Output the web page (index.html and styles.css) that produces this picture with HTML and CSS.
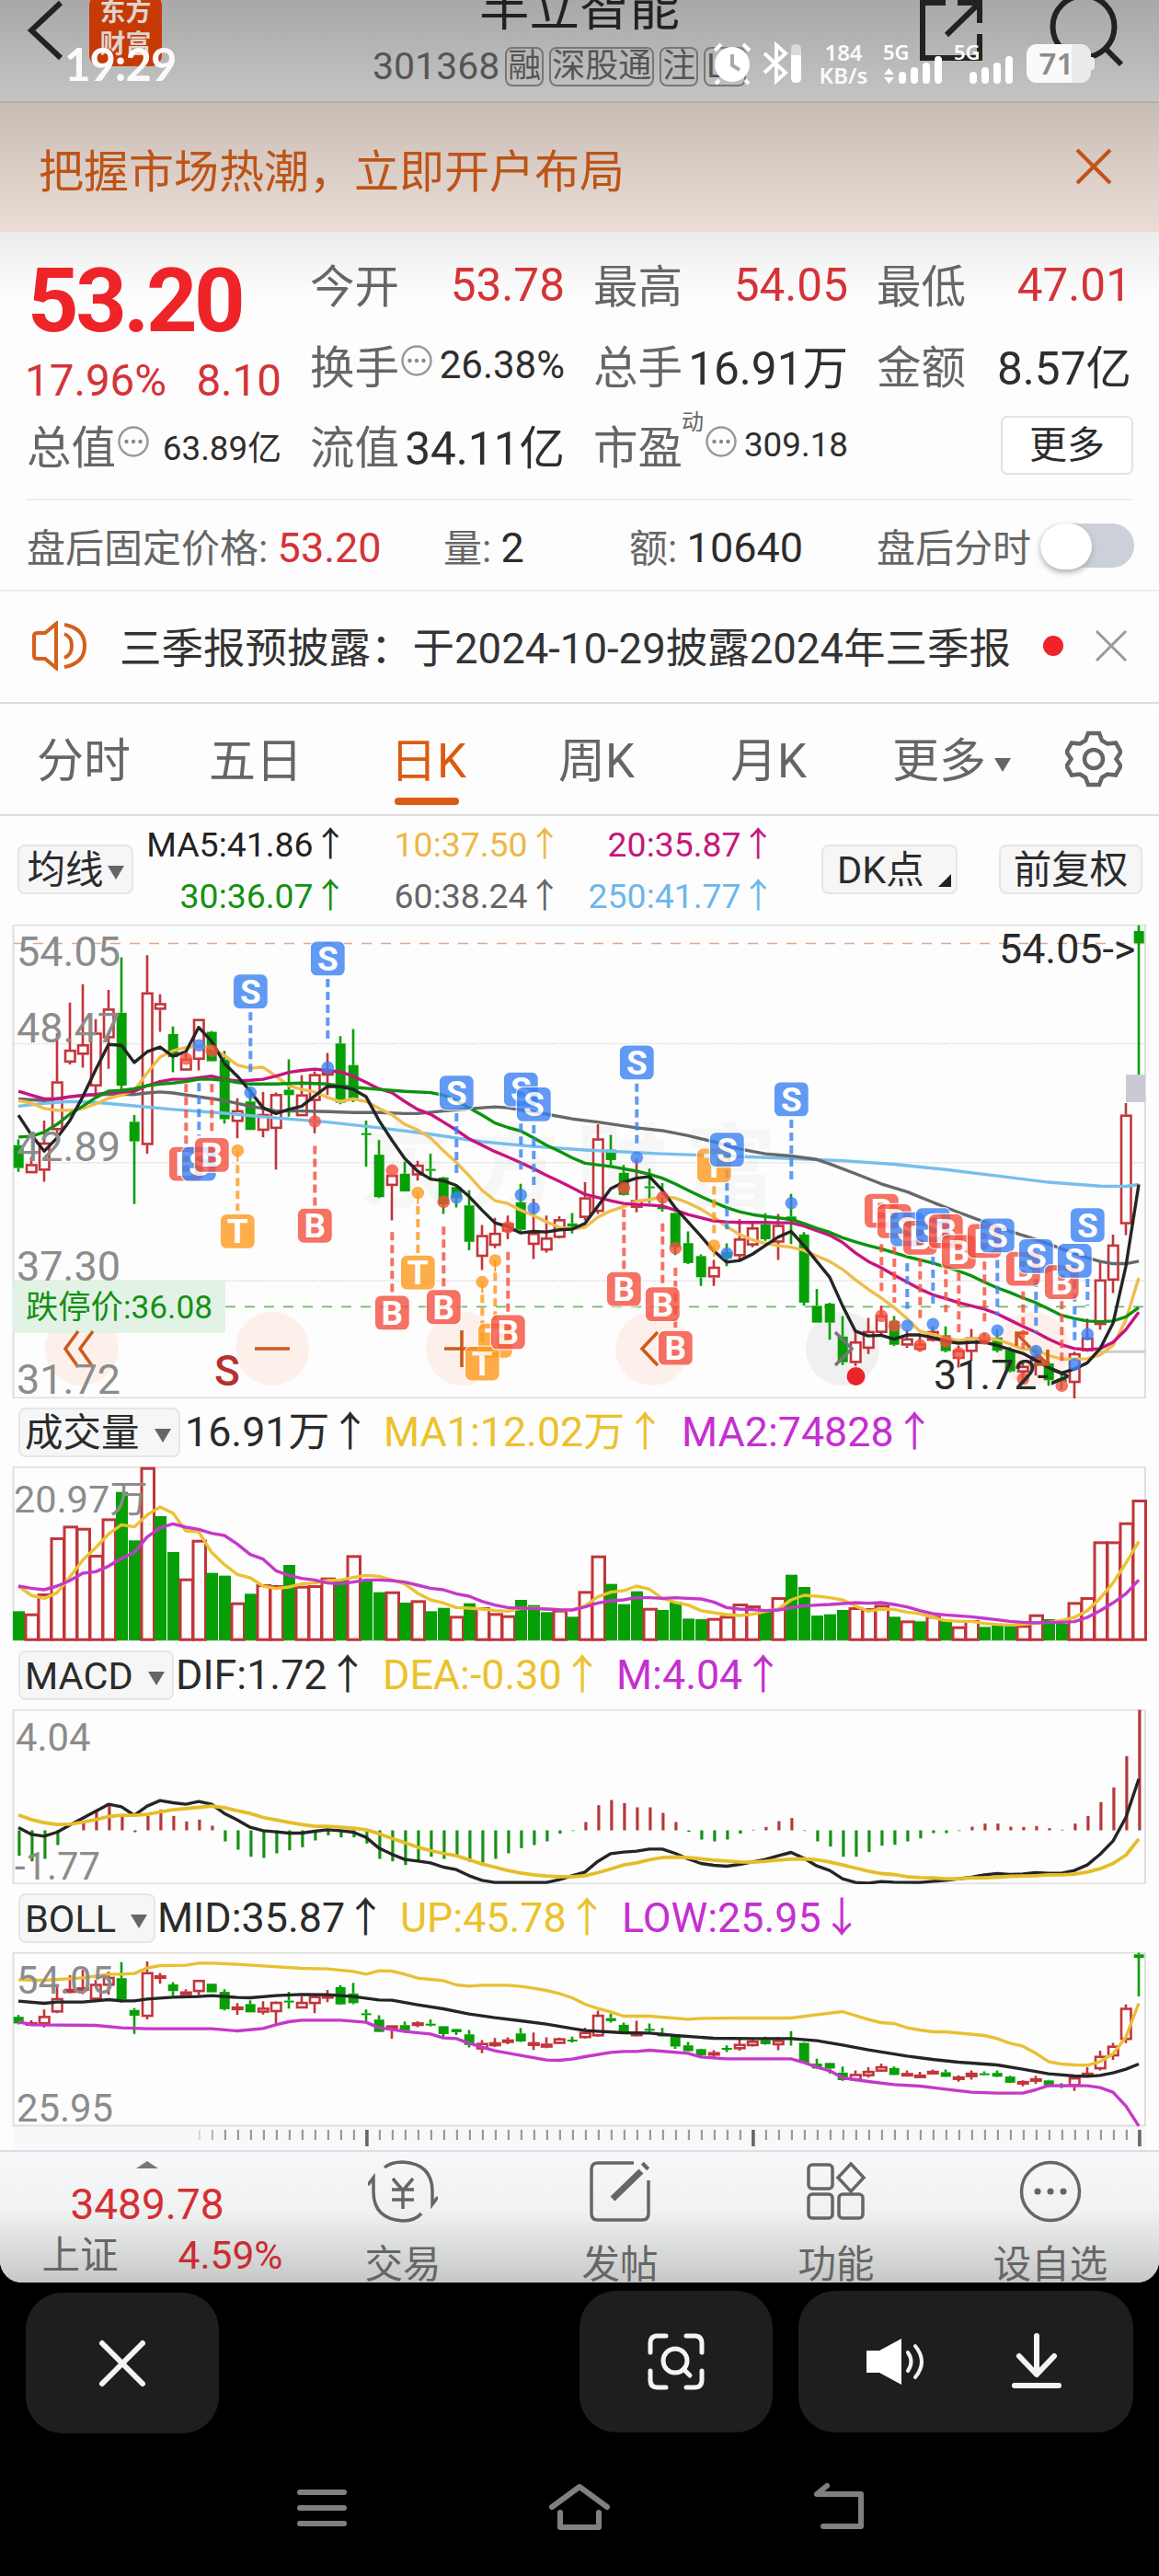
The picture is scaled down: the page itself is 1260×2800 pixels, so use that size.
FILE: index.html
```html
<!DOCTYPE html>
<html lang="zh-CN">
<head>
<meta charset="utf-8">
<title>丰立智能 301368</title>
<link rel="stylesheet" href="styles.css">
</head>
<body>
<div class="app">
  <header class="top">
    <svg class="top-back" width="40" height="70" viewBox="0 0 40 70"><path d="M36 3 4 33 36 63"/></svg>
    <div class="logo"><span>东方</span><span>财富</span></div>
    <div class="top-title">
      <div class="stock-name">丰立智能</div>
      <div class="stock-code"><span>301368</span><i>融</i><i>深股通</i><i>注</i><i>L2</i></div>
    </div>
    <svg class="top-share" width="70" height="72" viewBox="0 0 70 72"><path d="M29 3H4v60h62V37M42 3h24v22M66 3 30 38"/></svg>
    <svg class="top-search" width="84" height="76" viewBox="0 0 84 76"><circle cx="38" cy="29" r="33.500"/><path d="M62 53 79 70"/></svg>
    <div class="status">
      <span class="clock">19:29</span>
      <svg class="status-icons" width="110" height="48" viewBox="0 0 110 48">
        <circle cx="22" cy="25" r="19" fill="#fff"/><path d="M22 14v12l8 5" stroke="#aaa" stroke-width="4" fill="none"/>
        <path d="M3 10 10 3M34 3l7 7M8 42l-4 4M36 42l4 4" stroke="#fff" stroke-width="4"/>
        <path d="M57 13 80 34 70 43V4l10 9L57 34" fill="none" stroke="#fff" stroke-width="4"/>
        <rect x="86" y="3" width="11" height="42" rx="5" fill="#fff" opacity=".5"/><path d="M86 15h11v25q0 5-5.500 5T86 40z" fill="#fff"/>
      </svg>
      <span class="speed"><b>184</b><b>KB/s</b></span>
      <svg class="signal" width="150" height="48" viewBox="0 0 150 48">
        <text x="2" y="20">5G</text><text x="79" y="20">5G</text>
        <path class="arrows" d="M3 36 8.500 29l5.500 7zM3 39l5.500 7 5.500-7z"/>
        <path d="M23 42V37M36 42V32M49 42V27M62 42V20M100 42V37M113 42V32M126 42V27M139 42V20"/>
      </svg>
      <span class="battery">71</span>
    </div>
  </header>

  <div class="banner"><span>把握市场热潮，立即开户布局</span><svg width="40" height="40" viewBox="0 0 40 40"><path d="M2 2 38 38M38 2 2 38"/></svg></div>

  <section class="quote">
    <div class="quote-grid">
      <div class="lead"><div class="price">53.20</div><div class="chg"><span>17.96%</span><span>8.10</span></div></div>
      <div class="cell"><label>今开</label><b class="up">53.78</b></div>
      <div class="cell"><label>最高</label><b class="up">54.05</b></div>
      <div class="cell"><label>最低</label><b class="up">47.01</b></div>
      <div class="cell"><label>换手</label><svg class="dots"><use href="#more-dots"/></svg><b class="mid">26.38%</b></div>
      <div class="cell"><label>总手</label><b>16.91万</b></div>
      <div class="cell"><label>金额</label><b>8.57亿</b></div>
      <div class="cell"><label>总值</label><svg class="dots"><use href="#more-dots"/></svg><b class="small">63.89亿</b></div>
      <div class="cell"><label>流值</label><b>34.11亿</b></div>
      <div class="cell pe"><label>市盈<sup>动</sup></label><svg class="dots"><use href="#more-dots"/></svg><b class="small">309.18</b></div>
      <div class="cell end"><button class="more">更多</button></div>
    </div>
    <div class="after">
      <span>盘后固定价格: <b class="up">53.20</b></span>
      <span>量: <b>2</b></span>
      <span>额: <b>10640</b></span>
      <span>盘后分时</span>
      <span class="toggle"><i></i></span>
    </div>
  </section>

  <section class="notice">
    <svg width="62" height="54" viewBox="0 0 62 54"><path d="M3 16q0-3 4-3h8L27 3v48L15 41H7q-4 0-4-3zM36 14q8 3 8 13t-8 13M36 4q22 4 22 23T36 50"/></svg>
    <span class="notice-text">三季报预披露：于2024-10-29披露2024年三季报</span>
    <i class="red-dot"></i>
    <svg class="close" width="36" height="36" viewBox="0 0 36 36"><path d="M2 2 34 34M34 2 2 34"/></svg>
  </section>

  <nav class="tabs">
    <span>分时</span><span>五日</span><span class="on">日K</span><span>周K</span><span>月K</span><span>更多<i class="caret"></i></span>
    <svg width="62" height="62" viewBox="0 0 62 62"><path d="M25 3h12l3 8 6 3.500 9-1 5.500 10-5 7.500 5 7.500-5.500 10-9-1-6 3.500-3 8H25l-3-8-6-3.500-9 1L1.500 38.500l5-7.500-5-7.500L7 13.500l9 1 6-3.500z"/><circle cx="31" cy="31" r="10"/></svg>
  </nav>

  <section class="ma">
    <button class="pill ma-pill">均线<i class="caret"></i></button>
    <div class="ma-grid">
      <span class="k">MA5:41.86↑</span><span class="y">10:37.50↑</span><span class="m">20:35.87↑</span>
      <span class="g">30:36.07↑</span><span class="s">60:38.24↑</span><span class="b">250:41.77↑</span>
    </div>
    <button class="pill dk">DK点<i></i></button>
    <button class="pill fq">前复权</button>
  </section>

  <svg class="chart" id="kline" width="1260" height="515"></svg>
  <div class="ind vol"><button class="pill">成交量<i class="caret"></i></button><span>16.91万↑</span><span class="gold">MA1:12.02万↑</span><span class="purple">MA2:74828↑</span></div>
  <svg class="chart" id="volume" width="1260" height="190"></svg>
  <div class="ind macd"><button class="pill">MACD<i class="caret"></i></button><span>DIF:1.72↑</span><span class="gold">DEA:-0.30↑</span><span class="purple">M:4.04↑</span></div>
  <svg class="chart" id="macd" width="1260" height="190"></svg>
  <div class="ind boll"><button class="pill">BOLL<i class="caret"></i></button><span>MID:35.87↑</span><span class="gold">UP:45.78↑</span><span class="purple">LOW:25.95↓</span></div>
  <svg class="chart" id="boll" width="1260" height="215"></svg>

  <footer class="bottom">
    <div class="index"><i class="tri"></i><div class="idx-value">3489.78</div><div class="idx-row"><span>上证</span><b>4.59%</b></div></div>
    <div class="item"><svg width="76" height="68" viewBox="0 0 76 68"><path d="M18 8Q25 2 38 2q32 2 32 32v14l6-8M58 58Q51 66 38 66 6 64 6 34V19L0 27M27 20l11 13 11-13M38 33v20M26 32h24M26 43h24"/></svg><span>交易</span></div>
    <div class="item"><svg width="66" height="68" viewBox="0 0 66 68"><path d="M48 3H9Q2 3 2 10v48q0 7 7 7h48q7 0 7-7V22"/><path d="M56 12 25 42" stroke-width="7"/><path d="M59 8l3-3" stroke-width="9"/></svg><span>发帖</span></div>
    <div class="item"><svg width="66" height="68" viewBox="0 0 66 68"><rect x="3" y="5" width="26" height="26" rx="4"/><rect x="3" y="37" width="26" height="26" rx="4"/><rect x="36" y="37" width="26" height="26" rx="4"/><path d="M49 4 63 19 49 34 35 19z"/></svg><span>功能</span></div>
    <div class="item"><svg width="68" height="68" viewBox="0 0 68 68"><circle cx="34" cy="34" r="31.500"/><path d="M20 34h.1M34 34h.1M48 34h.1" stroke-width="7" stroke-linecap="round"/></svg><span>设自选</span></div>
  </footer>
</div>

<div class="tools">
  <div class="tool t1"><svg width="56" height="56" viewBox="0 0 56 56"><path d="M6 6 50 50M50 6 6 50"/></svg></div>
  <div class="tool t2"><svg width="64" height="64" viewBox="0 0 64 64"><path d="M4 22V12q0-8 8-8h9M43 4h9q8 0 8 8v10M4 42v10q0 8 8 8h9M43 60h9q8 0 8-8V42"/><circle cx="31" cy="31" r="13"/><path d="M40 40l7 7"/></svg></div>
  <div class="tool t3">
    <svg width="66" height="56" viewBox="0 0 66 56"><path d="M2 16h14L40 3v50L16 40H2z" fill="#fff" stroke="none"/><path d="M47 18q7 10 0 20M55 11q14 17 0 34" stroke-width="4"/></svg>
    <svg width="56" height="64" viewBox="0 0 56 64"><path d="M28 4v40M9 26l19 20 19-20M4 58h48"/></svg>
  </div>
</div>
<div class="sysnav">
  <svg width="54" height="52" viewBox="0 0 54 52"><path d="M3 11h48M3 28h48M3 45h48"/></svg>
  <svg width="66" height="54" viewBox="0 0 66 54"><path d="M3 27 33 5 63 27M12 33v16h42V33"/></svg>
  <svg width="58" height="54" viewBox="0 0 58 54"><path d="M16 4 5 13h48v35H12"/></svg>
</div>

<svg width="0" height="0" class="defs"><symbol id="more-dots" viewBox="0 0 36 36"><circle cx="18" cy="18" r="15.500" fill="none" stroke="#999" stroke-width="2.500"/><circle cx="10.500" cy="18" r="2.200" fill="#888"/><circle cx="18" cy="18" r="2.200" fill="#888"/><circle cx="25.500" cy="18" r="2.200" fill="#888"/></symbol></svg>
<script src="chart.js"></script>
</body>
</html>
```
FILE: styles.css
```css
* { box-sizing: border-box; }
body { margin: 0; width: 1260px; height: 2800px; background: #000; color: #2b2b2b; font-family: Roboto, "Noto Sans CJK SC", sans-serif; overflow: hidden; }
button { font-family: inherit; color: #2b2b2b; margin: 0; }
svg { display: block; flex: none; }
i { font-style: normal; }
b { font-weight: 400; }
.defs { position: absolute; }
.app { height: 2481px; background: #fdfdfd; border-radius: 0 0 24px 24px; overflow: hidden; }

.top { position: relative; height: 112px; display: flex; padding-left: 30px; background: linear-gradient(#a8a8a8, #c4c4c4); border-bottom: 2px solid #b0b0b0; }
.top svg { fill: none; stroke: #222; }
.top-back, .top-share, .top-search { stroke-width: 6; }
.logo { width: 79px; height: 78px; margin: -6px 0 0 27px; background: #c63a05; border-radius: 12px; color: #ded4ce; font-size: 28px; line-height: 35px; display: flex; flex-direction: column; align-items: center; padding-top: 2px; font-weight: 700; }
.top-title { width: 540px; margin-left: 229px; display: flex; flex-direction: column; align-items: flex-start; }
.stock-name { font-size: 54.500px; line-height: 60px; margin: -22px 0 0 116px; color: #222; white-space: nowrap; }
.stock-code { margin-top: 9px; display: flex; align-items: center; font-size: 41px; height: 50px; color: #555; }
.stock-code span { margin-right: 6px; }
.stock-code i { border: 2px solid #777; border-radius: 8px; height: 43px; line-height: 38px; font-size: 36px; padding: 0 1px; margin-right: 6px; white-space: nowrap; }
.top-share { position: absolute; left: 999px; top: 0; }
.top-search { position: absolute; left: 1140px; top: 0; }
.status { position: absolute; left: 70px; top: 44px; width: 1125px; height: 50px; display: flex; align-items: center; color: #fafafa; }
.status svg { stroke: none; }
.clock { font-family: Lato, sans-serif; font-size: 49px; font-weight: 700; width: 704px; letter-spacing: -1px; flex: none; }
.status-icons { margin-right: 6px; }
.speed { font-family: "Noto Sans", sans-serif; font-size: 24px; line-height: 25px; display: flex; flex-direction: column; align-items: center; width: 54px; flex: none; }
.speed b { font-weight: 600; }
.signal { margin-left: 14px; }
.signal text { fill: #fff; font-family: "Noto Sans", sans-serif; font-size: 22px; font-weight: 600; }
.signal path { stroke: #fff; stroke-width: 8; stroke-linecap: round; }
.signal .arrows { fill: #fff; stroke: none; }
.battery { position: relative; width: 70px; height: 42px; flex: none; border-radius: 11px; background: linear-gradient(90deg, #fafafa 49px, #ebebeb 49px); color: #8b8b8b; font-family: "Noto Sans", sans-serif; font-size: 33px; line-height: 42px; font-weight: 600; text-align: center; margin: 0 0 0 8px; padding-right: 5px; }
.battery::after { content: ""; position: absolute; right: -4px; top: 14px; width: 4px; height: 14px; border-radius: 0 3px 3px 0; background: #ebebeb; }

.banner { height: 140px; padding: 0 51px 0 42px; display: flex; align-items: center; justify-content: space-between; background: linear-gradient(#c8bdb5, #ebddd6); color: #bd5417; font-size: 49px; }
.banner svg { stroke: #c45217; stroke-width: 4; margin-bottom: 2px; }

.quote { height: 389px; padding: 13px 28px 0 29px; background: linear-gradient(#ececec, #fdfdfd 70px); }
.quote-grid { display: grid; grid-template-columns: repeat(4, 277px); grid-template-rows: repeat(3, 87.500px); column-gap: 31px; }
.lead { grid-row: 1 / 3; color: #ee2428; }
.price { font-size: 97px; font-weight: 700; line-height: 100px; margin: 12px 0 0 1px; letter-spacing: -3.500px; }
.chg { display: flex; justify-content: space-between; font-size: 47.500px; line-height: 60px; margin: 7px 0 0 -2px; color: #d43338; }
.cell { display: flex; align-items: center; }
.cell label { font-size: 48.500px; color: #666; position: relative; white-space: nowrap; margin-top: -1px; }
.cell b { margin-left: auto; font-size: 49.500px; color: #2e2e2e; white-space: nowrap; }
.cell b.up { margin-top: 3px; }
.cell b.up, .after b.up { color: #d43338; }
.cell b.mid { font-size: 42px; }
.cell b.small { font-size: 36.800px; }
.dots { width: 36px; height: 36px; margin: -8px 0 0 1px; }
.cell sup { font-size: 24px; position: absolute; left: 96px; top: -7px; line-height: 36px; }
.pe .dots { margin-left: 24px; }
.end { justify-content: flex-end; }
.more { width: 144px; height: 64px; border: 2px solid #e3e3e3; border-radius: 7px; background: #fff; font-size: 41px; line-height: 54px; padding: 0; margin: 0 -2px 0 0; }
.after { margin-top: 14px; border-top: 2px solid #eee; height: 103px; display: grid; grid-template-columns: 453px 202px 269px 178px 102px; align-items: center; font-size: 42px; color: #666; white-space: nowrap; padding-bottom: 3px; }
.after b { font-size: 45px; color: #2b2b2b; }
.toggle { height: 48px; border-radius: 24px; background: #ccd0d8; }
.toggle i { display: block; width: 56px; height: 50px; border-radius: 28px; background: #fff; box-shadow: 0 3px 6px #aaa; }

.notice { height: 124px; border-top: 2px solid #eee; border-bottom: 2px solid #ddd; display: flex; align-items: center; padding: 0 0 2px 34px; }
.notice svg { fill: none; stroke: #d65f1a; stroke-width: 4; }
.notice-text { margin: -3px 0 0 34px; font-size: 45.500px; width: 1004px; color: #333; white-space: nowrap; }
.red-dot { width: 22px; height: 22px; border-radius: 50%; background: #ee2428; margin: 0 34px 0 0; }
.notice .close { stroke: #999; stroke-width: 3; }

.tabs { height: 122px; border-bottom: 2px solid #ddd; display: grid; grid-template-columns: 187px 197px 183px 187px 176px 188px 62px; padding-left: 40px; align-items: center; font-size: 51px; color: #666; }
.tabs span { position: relative; white-space: nowrap; margin-top: -4px; }
.tabs .on { color: #db5b12; }
.tabs .on::after { content: ""; position: absolute; left: 5px; bottom: -15px; width: 70px; height: 8px; border-radius: 4px; background: #db5b12; }
.caret { display: inline-block; border: 9px solid transparent; border-top: 15px solid #666; border-bottom: 0; vertical-align: middle; margin-left: 9px; }
.tabs svg { fill: none; stroke: #666; stroke-width: 4.500; }

.ma { height: 118px; display: flex; padding-left: 19px; align-items: flex-start; }
.pill { height: 54px; border: 2px solid #e6e6e8; border-radius: 8px; background: #f6f6f7; font-size: 41.500px; line-height: 45px; padding: 0; white-space: nowrap; flex: none; }
.ma .pill { margin-top: 31px; }
.ma-pill { width: 126px; }
.ma-pill .caret { margin-left: 4px; }
.ma-grid { display: grid; grid-template-columns: 233px 233px 232px; grid-template-rows: 56px 56px; font-size: 37.400px; line-height: 56px; text-align: right; margin-top: 3px; }
.k { color: #222; } .y { color: #ecb945; } .m { color: #c4187c; } .g { color: #159015; } .s { color: #666; } .b { color: #6cb7ea; }
.dk { width: 148px; margin-left: 50px; text-align: left; padding-left: 15px; position: relative; }
.dk i { position: absolute; right: 5px; bottom: 6px; border-left: 14px solid transparent; border-bottom: 14px solid #222; }
.fq { width: 156px; margin-left: 45px; }

.ind { height: 74px; padding: 10px 0 0 20px; display: grid; font-size: 44.800px; line-height: 54px; white-space: nowrap; }
.ind .pill { text-align: left; padding-left: 5px; line-height: 47px; }
.ind .caret { margin-left: 16px; }
.vol { grid-template-columns: 181px 216px 324px 1fr; }
.vol .pill { width: 176px; }
.macd { grid-template-columns: 171px 225px 254px 1fr; }
.macd .pill { width: 169px; }
.boll { grid-template-columns: 151px 264px 241px 1fr; }
.boll .pill { width: 149px; }
.gold { color: #ebc22c; } .purple { color: #c52fd0; }
.chart { font-size: 44px; }
.chart text { fill: #8c8c8c; }

.bottom { height: 145px; border-top: 2px solid #dedee2; background: linear-gradient(#f7f8fa, #f0f1f1 45%, #c6c7c7); display: grid; grid-template-columns: 320px 236px 236px 234px 232px; color: #666; font-size: 41.500px; }
.index { display: flex; flex-direction: column; align-items: center; }
.tri { border: 12px solid transparent; border-bottom: 8px solid #777; border-top: 0; margin-top: 10px; }
.idx-value { font-size: 46px; line-height: 54px; margin-top: 12px; color: #d42f34; }
.idx-row { display: flex; gap: 65px; line-height: 58px; padding-left: 33px; }
.idx-row b { color: #c92c31; font-size: 42.500px; }
.item { display: flex; flex-direction: column; align-items: center; padding-top: 9px; }
.item svg { fill: none; stroke: #666; stroke-width: 3.500; }
.item span { line-height: 60px; margin-top: 16px; }

.tools { height: 163px; padding: 9px 28px 0; display: grid; grid-template-columns: 210px 336px 210px 364px; column-gap: 28px; }
.tool { height: 154px; border-radius: 40px; background: #1e1e1e; display: flex; align-items: center; justify-content: center; }
.tool svg { fill: none; stroke: #f4f4f4; stroke-width: 6; stroke-linecap: round; stroke-linejoin: round; }
.t1 { margin-top: 2px; height: 153px; }
.t2 { grid-column: 3; }
.t2 svg { stroke-width: 5; }
.t3 { justify-content: flex-start; padding-left: 72px; gap: 93px; }
.sysnav { display: flex; height: 156px; padding: 54px 0 0 323px; gap: 220px; }
.sysnav svg { fill: none; stroke: #808080; stroke-width: 6; stroke-linecap: round; stroke-linejoin: round; }
```
FILE: chart.js
```js
const NS = 'http://www.w3.org/2000/svg';
const RED = '#c2353a', GREEN = '#06a006';
const X = i => 20 + 14 * i;

function el(parent, tag, attrs, text) {
  const node = document.createElementNS(NS, tag);
  for (const k in attrs) node.setAttribute(k, attrs[k]);
  if (text) node.textContent = text;
  parent.appendChild(node);
  return node;
}

/* Series text: plain numbers are consecutive samples, "i:v" jumps to sample i. */
function line(svg, data, y, color, width = 3.4) {
  let i = -1;
  const pts = data.trim().split(/\s+/).map(t => {
    if (t.includes(':')) { const p = t.split(':'); i = +p[0]; return [i, +p[1]]; }
    return [++i, +t];
  });
  el(svg, 'polyline', { points: pts.map(p => X(p[0]) + ',' + y(p[1])).join(' '), fill: 'none', stroke: color, 'stroke-width': width, 'stroke-linejoin': 'round' });
}
function frame(svg, h) {
  el(svg, 'rect', { x: 14.5, y: .5, width: 1230.5, height: h, fill: 'none', stroke: '#dedede', 'stroke-width': 2 });
}
function label(svg, x, mid, s, size, fill, weight) {
  el(svg, 'text', { x, y: mid + size * .36, style: `font-size:${size}px;` + (fill ? `fill:${fill};` : '') + (weight ? `font-weight:${weight}` : '') }, s);
}

/* colour, high, body top, body bottom, low */
const candles = `g720,738,810,822 r775,798,826,826 r660,730,818,853 r385,537,690,700 r288,437,477,483 r230,420,452,493 r340,383,552,575
r248,307,400,497 g145,320,550,585 g643,664,726,924 r138,256,737,765 r262,290,310,380 g363,387,460,508 r440,465,502,502 r340,340,468,502
g377,380,473,473 g440,468,656,670 r590,628,664,716 g560,600,690,690 r570,640,692,713 r572,577,686,815 g467,563,580,648 r517,578,646,646
r505,514,598,700 r447,505,518,580 g394,417,604,609 g371,485,590,602 g660,700,703,806 g722,768,902,905 r830,832,866,975 g790,828,884,884
r787,800,833,850 g765,813,818,843 g838,840,925,955 g868,870,905,935 g880,928,1043,1070 r990,1022,1090,1132 r967,1015,1055,1063
r960,985,1010,1035 g860,918,1005,1010 r907,1015,1052,1097 r960,1030,1070,1077 r962,972,1030,1033 g952,985,995,1017 r855,903,967,975
r672,717,948,955 g705,752,785,802 g800,825,895,897 r780,912,935,950 g812,868,872,920 g858,930,940,948 g950,952,1060,1085
g1010,1047,1110,1113 g1083,1088,1155,1182 r1100,1122,1155,1182 g1048,1075,1095,1120 r972,1033,1088,1105 r978,998,1054,1060
g953,988,1035,1040 r955,990,1045,1100 g892,963,977,1050 g1012,1020,1235,1245 g1192,1245,1298,1298 g1235,1238,1298,1352
g1277,1342,1423,1432 r1320,1358,1425,1435 r1283,1325,1380,1397 r1245,1275,1330,1335 g1277,1293,1368,1372 r1320,1348,1370,1378
r1335,1365,1383,1390 r1310,1325,1355,1358 g1310,1338,1388,1392 r1370,1385,1412,1440 r1318,1345,1390,1418 g1330,1350,1353,1360
g1320,1345,1387,1392 g1375,1385,1452,1455 r1425,1435,1455,1490 r1375,1405,1420,1465 g1420,1427,1480,1497 g1455,1475,1485,1510
r1390,1395,1488,1540 r1285,1345,1388,1390 r1105,1162,1305,1320 r1020,1052,1165,1205 r605,642,987,1022 g44,62,100,517`
  .trim().split(/\s+/).map(t => [t[0], ...t.slice(1).split(',').map(Number)]);

function drawCandles(svg, y) {
  candles.forEach(([c, hi, top, bot, lo], i) => {
    const color = c === 'r' ? RED : GREEN, x = X(i);
    const t = y(top), b = Math.max(y(bot), t + 2);
    el(svg, 'path', { d: `M${x} ${y(hi)}V${t}M${x} ${b}V${y(lo)}`, stroke: color, 'stroke-width': 2.6 });
    if (c === 'r') el(svg, 'rect', { x: x - 5, y: t + 1, width: 10.5, height: Math.max(b - t - 2, 1.5), fill: b - t > 9 ? '#fdfdfd' : 'none', stroke: color, 'stroke-width': 2.6 });
    else el(svg, 'rect', { x: x - 5.3, y: t, width: 11, height: b - t, fill: color });
  });
}

/* ---- daily K ---- */
{
  const svg = document.getElementById('kline');
  const y = v => (v - 44) / 2.904 + .8;
  el(svg, 'text', { x: 390, y: 300, 'letter-spacing': 18, style: 'font-size:100px;font-weight:700;fill:#f6f6f7' }, '东方财富');
  frame(svg, 514);
  for (const v of [418, 793, 1166]) el(svg, 'path', { d: `M15 ${y(v)}H1244`, stroke: '#d8d8d8', 'stroke-width': 1.5, 'stroke-dasharray': '1.5 1.5' });
  el(svg, 'path', { d: `M15 ${y(101)}H1244`, stroke: '#dfa98c', 'stroke-width': 1.6, 'stroke-dasharray': '11 10' });
  el(svg, 'path', { d: `M245 ${y(1248)}H1244`, stroke: '#6cba6c', 'stroke-width': 1.6, 'stroke-dasharray': '11 10' });
  el(svg, 'path', { d: `M1190 ${y(1390)}H1245`, stroke: '#ccc', 'stroke-width': 3 });
  [89, 296, 503, 709, 916, 1123].forEach((x, i) => el(svg, 'circle', { cx: x, cy: 461, r: 40, fill: i === 4 ? '#f0f0f0' : '#fdf0ea' }));
  const icon = (d, c) => el(svg, 'path', { d, fill: 'none', stroke: c || '#cc5a1c', 'stroke-width': 3.6 });
  el(svg, 'rect', { x: 14, y: 386, width: 231, height: 58, rx: 4, fill: '#dff2e3', opacity: .9 });
  drawCandles(svg, y);

  line(svg, `0:615 2:606 4:600 6:603 8:610 12:625 16:637 20:652 24:665 28:683 32:703 36:727 40:742 44:753 50:765 55:772 60:780 64:787 68:798 72:815 76:835 80:855 84:867 86:868 87:862`, y, '#76bfec');
  line(svg, `0:592 2:597 4:585 6:578 8:577 9:578 10:573 11:570 12:573 14:585 16:597 18:615 20:630 22:630 24:632 26:635 28:635 30:638 31:638 33:630 35:623 37:617 38:620 41:640 43:655 45:665 48:683 50:692 52:708 54:727 56:750 58:765 60:772 62:783 63:797 65:828 67:860 69:885 71:918 73:950 75:980 77:1010 79:1035 81:1065 83:1093 84:1105 85:1112 86:1112 87:1104`, y, '#686868');
  line(svg, `597 605 622 628 628 622 608 590 580 565 510 460 440 430 425 430 455 485 495 492 520 550 562 570 587 600 592 600 622 642 672 690 715 755 792 835 880 913 922 943 960 980 997 1003 997 965 945 932 915 910 900 905 920 940 965 995 1020 1037 1048 1055 1060 1070 1088 1105 1130 1163 1193 1220 1250 1285 1325 1335 1345 1355 1348 1347 1352 1365 1382 1383 1402 1413 1413 1412 1400 1370 1290 1157`, y, '#f0bd4c');
  line(svg, `568 580 592 592 585 580 578 572 570 568 550 537 530 530 525 520 530 535 533 530 520 508 502 498 502 507 520 540 560 572 600 625 640 665 690 718 738 758 775 793 812 833 852 872 893 903 913 922 925 927 930 943 957 967 977 980 982 982 982 983 983 993 1008 1022 1045 1078 1105 1125 1148 1170 1192 1210 1222 1235 1245 1255 1270 1290 1310 1328 1350 1368 1380 1383 1380 1360 1320 1265`, y, '#c8147f');
  line(svg, `712 710 697 672 640 615 588 567 565 560 550 545 542 537 530 530 533 540 545 545 545 22:542 24:545 26:555 28:562 30:568 32:572 33:580 597 620 643 668 682 693 715 738 757 778 795 46:805 48:820 830 842 860 880 900 918 935 948 957 963 60:972 985 1000 1013 1030 1043 1055 1065 1077 1090 1100 1110 1122 1135 1150 1170 1188 1203 1220 1235 1255 1275 1285 1293 1295 1293 1280 1250`, y, '#0c930f');
  line(svg, `643 705 757 715 660 585 500 420 423 477 443 428 457 443 366 410 480 520 568 620 638 625 615 583 552 553 562 585 660 722 780 820 845 850 865 900 943 983 995 1015 1010 1012 1005 1003 985 930 875 855 842 837 880 935 980 1025 1072 1107 1102 1082 1055 1028 1010 1055 1105 1155 1245 1325 1340 1338 1350 1337 1337 1345 1357 1363 1360 1360 1370 1383 1395 1417 1440 1457 1445 1425 1380 1300 1120 862`, y, '#252525');

  /* trade marks: kind+sample, badge centre, dash start, dash end, dot */
  const tint = { S: '#3b82f2', B: '#f4503f', T: '#ff9a1f' };
  const marks = `B13,797,545,735,465 S14,797,542,708,423 B15,769,545,705,440 T17,1010,800,945,755 S18,253,318,510,572 B23,992,740,930,663 S24,149,213,410,493
B29,1267,1012,1205,818 T31,1140,930,1080,888 B33,1249,995,1185,917 S34,572,637,830,903 T37,1355,1140,1290,1102 T36,1427,1210,1370,1170 B38,1328,1075,1265,997
S39,562,670,815,895 S40,609,675,865,937 B47,1192,940,1130,873 S48,477,543,735,777 B50,1240,985,1180,903 B51,1378,1125,1320,1063 T54,802,868,1020,1055
S55,752,815,1010,1080 S60,593,657,850,921 B67,945,1050,1200,1277 B68,978,1055,1235,1308 S69,1003,1110,1255,1308 B70,1030,1095,1285,1370 S71,990,1090,1250,1303
B72,1010,1120,1265,1357 B73,1075,1140,1330,1395 B75,1040,1105,1295,1348 S76,1023,1100,1275,1323 B78,1128,1200,1380,1475 S79,1088,1160,1330,1388
B81,1170,1230,1430,1497 S82,1103,1165,1365,1430 S83,990,1160,1245,1335`.trim().split(/\s+/);
  const parsed = marks.map(m => { const n = m.slice(1).split(',').map(Number); return [m[0], X(n[0]) + .3, ...n.slice(1).map(y)]; });
  icon('M85 442 71 461 85 481M101 442 87 461 101 481');
  icon('M277 461H315'); icon('M483 461H521M502 441V481'); icon('M715 443 698 461 715 479'); icon('M908 443 926 461 908 479', '#777');
  icon('M1105 458V444H1118M1105 444 1120 460M1124 478H1139V462M1139 478 1123 462');
  for (const [k, x, , a, b, dot] of parsed) {
    el(svg, 'path', { d: `M${x} ${a}V${b}`, stroke: tint[k], 'stroke-width': 4, 'stroke-dasharray': '9 5', opacity: .8 });
    el(svg, 'circle', { cx: x, cy: dot, r: 6.8, fill: tint[k], opacity: .8 });
    if (k === 'T') el(svg, 'path', { d: `M${x} ${dot}v12`, stroke: tint[k], 'stroke-width': 2 });
  }
  for (const [k, x, c] of parsed) {
    const g = el(svg, 'g', { opacity: .8 });
    el(g, 'rect', { x: x - 19, y: c - 19, width: 38, height: 38, rx: 7, fill: tint[k], stroke: '#fff', 'stroke-width': 1.2 });
    el(g, 'text', { x, y: c + 13, 'text-anchor': 'middle', style: 'font-size:37px;font-weight:700;fill:#fff' }, k);
  }
  el(svg, 'circle', { cx: 930.5, cy: 491, r: 10, fill: '#e8252a' });
  el(svg, 'rect', { x: 1224, y: 163, width: 21, height: 30, fill: '#c9cad4' });
  ['54.05', '48.47', '42.89', '37.30', '31.72'].forEach((s, i) => label(svg, 18, [28.5, 112, 241, 371, 494][i], s, 45));
  label(svg, 28, 415, '跌停价:36.08', 35.3, '#159015');
  label(svg, 233, 484.5, 'S', 46, '#b5322f', 500);
  label(svg, 1086, 25.5, '54.05->', 44.8, '#2a2a2a');
  label(svg, 1015, 488.5, '31.72->', 44.8, '#2a2a2a');
}

/* ---- volume ---- */
{
  const svg = document.getElementById('volume');
  const y = v => (v - 223) / 3 + 1;
  frame(svg, 189);
  `g692 r700 r635 r452 r414 r421 r509 r390 g303 g461 r223 g382 g499 r586 r460 g567 g576 r664 g635 r605 r608 g541 r610 r608 r583 g592 r510 g592 g630 r628 g664 r657 g692 g681 r708 g666 r680 r699 r706 g655 g672 g695 r688 g710 r627 r511 g603 g669 g627 r682 g688 g661 g716 g718 r715 r708 r668 r674 g690 r647 g573 g613 g706 g702 g688 r680 r683 r672 g710 r723 g725 r708 g725 r742 r722 g743 g738 g740 r738 r703 g718 g733 r663 r647 r465 r465 r403 r329`
    .split(' ').forEach((t, i) => {
      const top = y(+t.slice(1));
      if (t[0] === 'g') el(svg, 'rect', { x: X(i) - 6, y: top, width: 13, height: 189 - top, fill: GREEN });
      else el(svg, 'rect', { x: X(i) - 6, y: top + 1.2, width: 13.5, height: 187 - top, fill: '#fdfdfd', stroke: RED, 'stroke-width': 3 });
    });
  line(svg, `610 640 650 632 580 525 485 440 410 417 378 352 372 430 433 500 540 572 583 610 618 613 603 600 592 590 582 575 578 590 603 633 655 665 680 682 685 690 692 683 682 685 687 688 675 645 630 625 610 620 650 663 672 690 697 703 706 702 693 685 655 640 643 648 655 675 692 685 686 695 700 712 722 725 725 732 735 737 735 730 728 722 712 690 650 600 535 465`, y, '#ebc232');
  line(svg, `610 617 622 610 592 568 563 545 520 500 450 420 407 418 425 438 445 473 507 522 560 575 585 590 600 603 597 590 590 592 597 607 617 622 635 643 660 672 680 682 683 685 687 688 678 665 658 655 647 648 650 648 650 652 662 680 685 687 690 688 680 675 672 670 667 664 666 664 670 678 690 700 704 707 710 715 720 725 728 730 728 728 726 712 690 665 635 590`, y, '#c638c9');
  label(svg, 15, 35, '20.97万', 41.5);
}

/* ---- MACD ---- */
{
  const svg = document.getElementById('macd');
  const y = v => (v + 216) / 3 + .5;
  frame(svg, 189);
  `260 278 270 225 177 148 113 95 128 183 130 110 130 148 142 162 213 240 263 267 252 242 232 210 193 200 200 220 270 278 290 277 263 270 263 280 282 270 252 235 225 213 188 179 150 95 78 88 102 102 120 150 182 207 213 207 188 175 166 147 137 179 213 230 263 263 248 227 224 213 203 186 186 179 165 155 155 165 166 163 170 175 155 130 85 37 -65 -216`
    .split(' ').forEach((v, i) => el(svg, 'path', { d: `M${X(i) + .9} ${y(177)}V${y(+v)}`, stroke: v > 177 ? '#159015' : '#b5383a', 'stroke-width': 3.2 }));
  line(svg, `168 190 196 183 160 137 115 92 100 128 98 80 87 92 83 92 122 143 167 178 182 186 186 180 175 178 183 200 235 255 272 277 283 297 305 325 340 347 41:347 338 325 313 278 253 248 245 238 238 252 270 285 291 294 288 280 272 260 249 268 293 308 335 347 349 344 346 70:347 72:340 74:330 322 318 321 319 315 317 317 308 290 255 212 135 10`, y, '#252525');
  line(svg, `127 142 152 158 157 150 142 132 128 128 125 117 110 106 102 98 103 113 122 135 143 151 158 164 164 167 170 175 188 203 217 232 243 252 260 273 287 297 308 316 322 326 328 328 325 315 303 290 283 273 266 264 266 270 274 277 280 281 278 274 271 270 273 280 290 300 310 318 321 328 331 332 335 335 332 332 330 327 326 325 322 322 320 313 302 285 258 205`, y, '#e5bd28', 3.8);
  label(svg, 17, 30, '4.04', 41.8);
  label(svg, 16, 170, '-1.77', 41.8);
}

/* ---- BOLL and the date ruler ---- */
{
  const svg = document.getElementById('boll');
  const y = v => (v - 575) / 3 + .5;
  el(svg, 'rect', { x: 14, y: 190, width: 1232, height: 25, fill: '#f8f8fa' });
  frame(svg, 188);
  drawCandles(svg, v => y(575 + (v - 44) * .3012));
  line(svg, `0:663 2:665 5:657 7:645 645 643 625 617 13:616 609 609 17:613 19:618 22:626 24:628 26:636 645 634 635 645 658 662 666 680 684 681 38:681 685 691 698 708 722 743 757 768 782 49:782 52:792 789 56:788 60:788 62:777 64:767 66:793 803 806 820 827 833 833 75:845 855 870 880 903 930 938 941 942 930 905 850 740`, y, '#e8c032');
  line(svg, `0:733 2:740 736 5:736 7:728 732 732 726 12:720 14:718 715 17:721 722 20:715 22:711 24:712 26:718 28:729 730 31:745 33:758 35:775 37:787 39:797 41:808 43:822 829 47:836 49:837 51:845 54:854 57:855 60:855 62:862 64:876 66:892 69:912 71:923 73:932 76:941 78:955 80:970 82:977 978 975 967 955 938`, y, '#252525');
  line(svg, `0:800 810 6:812 8:820 10:823 15:823 17:830 19:822 810 800 795 25:795 27:802 820 825 832 32:840 853 855 870 883 895 39:910 41:925 926 922 914 46:900 897 897 893 52:903 915 55:921 60:921 933 948 960 983 66:995 68:1005 70:1010 72:1020 74:1030 76:1033 78:1033 1022 1008 83:1009 1015 1030 1075 1140`, y, '#c638c9');
  label(svg, 18, 30, '54.05', 41.8);
  label(svg, 18, 169, '25.95', 41.8);
  for (let i = 14; i < 88; i++) {
    const major = i % 30 === 27;
    el(svg, 'path', { d: `M${X(i) + .9} 193V${major ? 211 : 204}`, stroke: major ? '#666' : '#999', 'stroke-width': major ? 3.6 : 2.2, opacity: Math.min(1, (i - 13) / 3) });
  }
}
```
